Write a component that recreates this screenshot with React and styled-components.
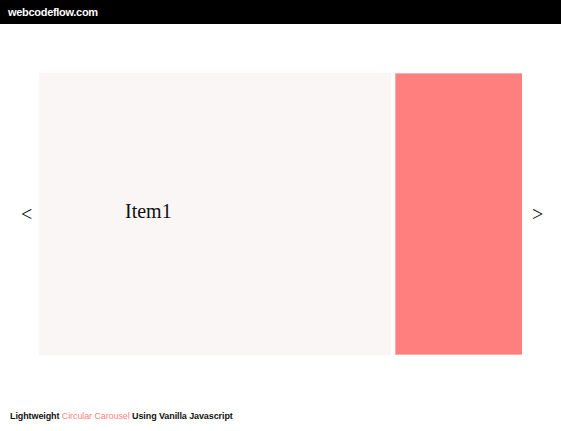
import React from "react";
import styled, { createGlobalStyle } from "styled-components";

const items = [
  { label: "Item1", color: "#faf6f6" },
  { label: "", color: "#ff7f7f" },
  { label: "", color: "#7fbfff" },
];

export default function App() {
  return (
    <>
      <Global />
      <Header>webcodeflow.com</Header>
      <Stage>
        <Arrow $pad={21}>&lt;</Arrow>
        <Viewport>
          <Track>
            {items.map((it, i) => (
              <Item key={i} $bg={it.color} $edge={i > 0}>
                {it.label}
              </Item>
            ))}
          </Track>
        </Viewport>
        <Arrow $pad={10}>&gt;</Arrow>
      </Stage>
      <Footer>
        Lightweight <Accent>Circular Carousel</Accent> Using Vanilla Javascript
      </Footer>
    </>
  );
}

const Global = createGlobalStyle`
  body {
    margin: 0;
    background: #fff;
    font-family: "Liberation Serif", serif;
  }
`;

const Header = styled.div`
  height: 24px;
  background: #000;
  color: #fff;
  font-family: "Liberation Sans", Arial, sans-serif;
  font-weight: 700;
  font-size: 11px;
  letter-spacing: -0.3px;
  line-height: 24px;
  padding-left: 8px;
`;

const Stage = styled.div`
  display: flex;
  align-items: center;
  margin-top: 49px;
  height: 282px;
`;

const Arrow = styled.div`
  width: 39px;
  box-sizing: border-box;
  padding-left: ${(p) => p.$pad}px;
  font-size: 20px;
  color: #111;
`;

const Viewport = styled.div`
  width: 483px;
  height: 282px;
  overflow: hidden;
`;

const Track = styled.div`
  display: flex;
  gap: 4px;
  height: 100%;
`;

const Item = styled.div`
  flex: 0 0 352px;
  box-sizing: border-box;
  display: flex;
  align-items: center;
  padding-left: 86px;
  padding-bottom: 6px;
  background: ${(p) => p.$bg};
  border: ${(p) => (p.$edge ? "1px solid rgba(255,255,255,0.35)" : "none")};
  font-size: 20px;
  color: #111;
`;

const Footer = styled.div`
  margin-top: 56px;
  padding-left: 10px;
  font-family: "Liberation Sans", Arial, sans-serif;
  font-weight: 700;
  font-size: 9px;
  letter-spacing: -0.1px;
  color: #111;
`;

const Accent = styled.span`
  color: #ff7f7f;
  font-weight: 400;
`;
